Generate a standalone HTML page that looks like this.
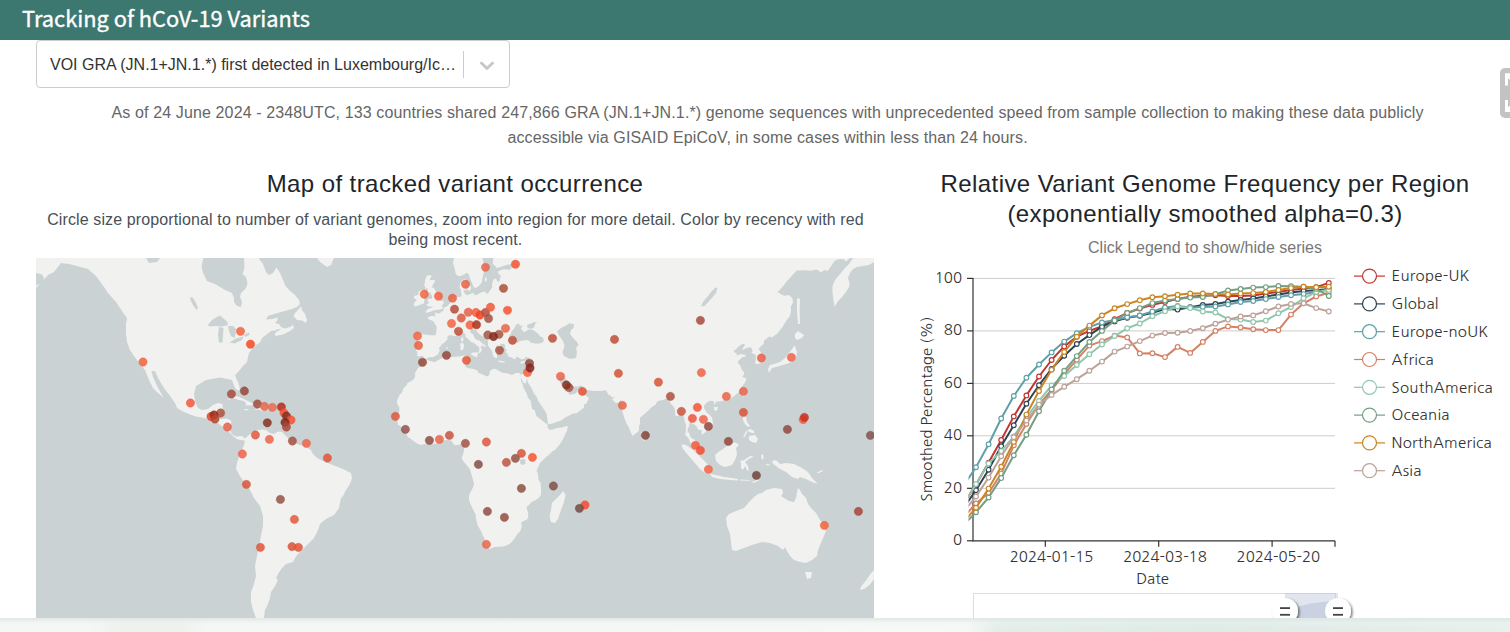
<!DOCTYPE html>
<html lang="en">
<head>
<meta charset="utf-8">
<title>Tracking of hCoV-19 Variants</title>
<style>
html,body{margin:0;padding:0;}
body{width:1510px;height:632px;overflow:hidden;background:#fff;position:relative;font-family:"Liberation Sans",Arial,sans-serif;color:#333;}
.abs{position:absolute;}
#hdr{left:0;top:0;width:1510px;height:40px;background:#3d7870;}
#hdr span{position:absolute;left:22px;top:1px;-webkit-text-stroke:0.35px #fff;font-family:"Noto Sans CJK SC","Liberation Sans",sans-serif;font-size:21.8px;line-height:34px;color:#fff;font-weight:400;white-space:nowrap;letter-spacing:0;}
#sel{left:36px;top:40px;width:472px;height:46px;border:1px solid #ccc;border-radius:4px;background:#fff;}
#sel .val{position:absolute;left:13px;top:0;line-height:47px;font-size:16px;color:#333;white-space:nowrap;letter-spacing:0;}
#sel .sep{position:absolute;left:426px;top:10px;width:1px;height:27px;background:#ccc;}
#sel svg{position:absolute;left:437.5px;top:11.5px;}
#intro{left:90.6px;top:100px;width:1354px;text-align:center;font-size:16px;line-height:25px;color:#666;letter-spacing:0.123px;}
#fs{left:1500px;top:68px;width:30px;height:50px;border-radius:5px;background:#c3c3c3;}
#fs svg{position:absolute;left:0;top:0;}
#mtitle{left:36px;top:168.4px;width:838px;text-align:center;font-size:24px;line-height:32px;color:#212529;white-space:nowrap;letter-spacing:0.42px;}
#msub{left:36.5px;top:210px;width:838px;text-align:center;font-size:16px;line-height:20px;color:#495057;letter-spacing:0.12px;}
#map{left:36px;top:258px;width:838px;height:360px;background:#cad2d3;overflow:hidden;}
#ctitle{left:900px;top:168.5px;width:610px;text-align:center;font-size:24px;line-height:30px;color:#212529;letter-spacing:0.42px;}
#csub{left:900px;top:238px;width:610px;text-align:center;font-size:16px;line-height:20px;color:#777;}
#chart{left:900px;top:258px;width:610px;height:374px;}
#chart text.lg{letter-spacing:0.28px;}
#chart text{font-family:"NanumGothic","Liberation Sans",sans-serif;font-size:15px;fill:#333;}
#foot{left:0;top:618px;width:1510px;height:14px;background:linear-gradient(180deg,rgba(222,230,228,0.9) 0,rgba(240,244,243,0.3) 5px,rgba(255,255,255,0) 10px),linear-gradient(100deg,#f5f7f6 0,#f5f7f6 6%,#edf2ed 8%,#edf2ed 12%,#f5f7f6 14%,#f6f8f7 64%,#e2eeea 66%,#deebe7 80%,#e6f0ed 100%);}
</style>
</head>
<body>
<div id="hdr" class="abs"><span>Tracking of hCoV-19 Variants</span></div>
<div id="sel" class="abs"><div class="val">VOI GRA (JN.1+JN.1.*) first detected in Luxembourg/Ic…</div><div class="sep"></div>
<svg width="24" height="24" viewBox="0 0 20 20"><path fill="#c6c6c6" d="M4.516 7.548c0.436-0.446 1.043-0.481 1.576 0l3.908 3.747 3.908-3.747c0.533-0.481 1.141-0.446 1.574 0 0.436 0.445 0.408 1.197 0 1.615-0.406 0.418-4.695 4.502-4.695 4.502-0.217 0.223-0.502 0.335-0.787 0.335s-0.57-0.112-0.789-0.335c0 0-4.287-4.084-4.695-4.502s-0.436-1.17 0-1.615z"/></svg></div>
<div id="intro" class="abs">As of 24 June 2024 - 2348UTC, 133 countries shared 247,866 GRA (JN.1+JN.1.*) genome sequences with unprecedented speed from sample collection to making these data publicly accessible via GISAID EpiCoV, in some cases within less than 24 hours.</div>
<div id="fs" class="abs"><svg width="30" height="50" viewBox="0 0 30 50"><path d="M6.5 17.5 V6.8 H14" fill="none" stroke="#fff" stroke-width="3"/><path d="M7 7.5 L14 14" fill="none" stroke="#fff" stroke-width="2.4"/><path d="M6.5 32 V42.6 H14" fill="none" stroke="#fff" stroke-width="3"/><path d="M7 42 L14 35.5" fill="none" stroke="#fff" stroke-width="2.4"/></svg></div>
<div id="mtitle" class="abs">Map of tracked variant occurrence</div>
<div id="msub" class="abs">Circle size proportional to number of variant genomes, zoom into region for more detail. Color by recency with red being most recent.</div>
<div id="map" class="abs">
<svg id="mapsvg" width="838" height="360" viewBox="36 258 838 360">
<g id="land" fill="#f1f1ef" stroke="none">
<polygon points="36.0,258.0 146.0,258.0 149.0,263.0 157.0,262.0 160.0,258.0 203.5,258.0 201.5,266.0 203.0,273.0 207.0,281.0 215.0,284.0 225.0,290.0 232.0,293.0 234.0,298.0 234.0,302.0 237.0,306.0 241.0,307.0 242.0,302.0 240.0,297.0 241.0,293.0 246.0,288.0 247.5,283.0 246.0,277.0 242.5,274.0 244.5,268.0 244.0,258.0 258.5,258.0 263.0,264.0 266.0,272.0 269.0,275.0 273.0,273.0 276.5,267.5 280.0,273.0 283.0,280.0 285.5,286.0 290.0,291.0 295.0,295.0 299.0,300.0 300.0,304.0 297.0,307.0 292.0,309.0 281.0,312.0 268.0,316.0 266.0,319.5 272.0,319.0 278.0,317.5 277.0,321.0 275.0,323.0 279.0,324.0 281.0,327.0 285.0,328.5 290.0,327.0 293.0,325.0 294.0,328.0 290.0,331.0 283.0,334.5 275.5,336.0 274.5,334.0 277.0,331.5 281.0,329.5 278.0,329.0 275.0,330.5 271.0,331.0 266.0,335.0 262.0,338.0 260.0,342.5 256.0,345.0 252.0,349.0 249.0,353.0 248.0,357.0 247.0,362.0 243.0,366.0 239.0,371.0 235.0,375.0 234.0,378.0 235.0,373.0 236.0,378.0 238.0,382.0 240.0,389.0 238.4,391.0 235.0,388.0 232.0,380.0 230.0,379.6 220.0,377.6 206.0,380.0 196.0,386.0 194.0,394.0 195.0,402.0 198.0,408.0 202.0,410.0 208.0,409.0 213.0,405.0 218.0,403.0 222.4,404.0 223.0,408.0 221.0,412.0 219.5,414.0 218.0,418.5 220.0,419.0 223.0,419.0 227.0,418.5 231.5,421.0 231.0,423.5 230.0,428.5 230.5,431.5 232.0,434.0 234.0,435.5 236.0,436.5 242.0,436.0 245.0,438.5 250.0,434.0 256.0,430.5 262.0,429.5 266.0,430.0 270.0,433.0 274.0,434.0 278.0,431.5 282.0,432.0 285.0,435.0 288.0,438.0 292.0,442.0 300.0,445.0 306.0,447.0 311.0,450.0 313.0,454.0 317.0,458.0 323.0,461.0 330.0,464.0 338.0,467.0 345.0,470.0 351.0,473.0 352.0,478.0 350.0,484.0 346.0,490.0 343.0,496.0 341.0,498.0 339.0,508.0 334.0,515.0 326.0,519.0 320.0,524.0 318.0,530.0 314.0,538.0 308.0,544.0 302.0,550.0 298.0,554.0 295.0,558.0 293.0,562.0 286.0,564.0 282.0,568.0 278.0,574.0 276.0,578.0 278.0,580.0 275.0,586.0 271.0,592.0 270.0,598.0 268.0,604.0 265.0,610.0 264.0,618.0 256.0,618.0 253.0,610.0 251.0,602.0 251.0,592.0 254.0,584.0 256.0,576.0 255.0,566.0 257.0,556.0 259.0,546.0 261.0,536.0 263.0,526.0 263.0,516.0 260.0,506.0 254.0,498.0 249.0,488.0 244.0,482.0 240.0,476.0 236.0,469.0 237.0,463.0 239.0,457.0 242.0,450.0 244.0,445.0 245.0,441.0 244.0,440.5 238.0,439.5 234.0,437.0 230.0,433.0 224.0,428.0 218.0,423.0 212.0,420.0 204.0,418.0 194.0,416.0 184.0,412.0 177.0,408.0 175.0,403.0 170.0,396.0 164.0,388.0 158.0,378.0 155.0,371.0 151.5,371.0 153.0,377.0 157.0,386.0 162.0,395.0 163.5,397.5 158.0,393.0 153.0,388.0 149.0,380.0 145.0,370.0 140.0,364.0 134.0,356.0 130.0,350.0 127.0,342.0 126.0,334.0 126.0,324.0 127.0,318.0 124.0,314.0 116.0,302.0 108.0,293.0 104.0,287.0 96.0,276.0 88.0,269.0 69.0,264.0 61.0,263.0 54.0,272.0 48.0,275.0 36.0,288.0"/>
<polygon points="317.0,258.0 320.0,262.0 327.0,267.0 331.0,265.0 334.0,258.0"/>
<polygon points="295.0,313.0 299.0,309.0 301.0,306.0 302.0,310.0 305.0,314.0 307.0,320.0 306.0,323.0 302.0,320.5 297.0,320.0 293.5,316.0"/>
<polygon points="227.2,399.9 232.0,397.2 234.5,396.3 238.2,396.6 240.8,397.7 245.8,400.1 249.5,401.7 254.0,404.2 252.0,405.2 245.2,405.4 246.5,403.6 243.8,400.9 238.8,399.9 235.0,398.5 232.5,398.2 229.8,399.6"/>
<polygon points="253.5,409.2 257.5,409.1 258.6,408.7 257.5,407.3 256.0,405.9 257.8,405.1 262.0,405.4 264.8,405.9 266.5,407.1 268.6,408.7 267.8,409.7 264.5,409.3 261.8,411.2 260.0,409.8 257.0,409.8 253.5,409.6"/>
<polygon points="243.6,409.5 247.0,408.9 249.0,410.1 247.2,410.6 244.0,410.0"/>
<polygon points="271.5,408.9 275.5,409.2 275.2,410.2 271.5,410.4"/>
<polygon points="427.0,275.5 431.9,275.3 429.5,280.2 434.5,279.8 435.0,280.7 434.4,282.3 432.5,285.8 431.2,287.6 433.2,287.6 434.5,288.7 436.0,292.0 439.2,295.8 439.8,298.0 440.4,300.5 439.8,301.1 442.8,300.7 443.9,302.5 442.8,304.8 441.2,306.6 443.1,307.1 442.9,308.2 441.9,309.0 440.1,309.6 437.5,309.7 433.4,310.6 430.4,311.8 426.5,312.7 425.2,312.3 428.2,308.6 432.0,307.8 432.8,306.6 431.5,306.8 428.8,306.4 426.2,305.0 429.2,302.5 427.6,301.3 428.0,298.8 432.0,298.8 432.2,295.8 430.5,294.1 431.0,292.2 427.4,293.6 426.8,292.4 427.9,290.0 427.2,287.8 425.8,288.9 425.1,290.7 425.5,287.6 424.0,284.4 425.0,283.0 425.0,280.2 426.2,277.2"/>
<polygon points="421.0,290.2 424.1,291.0 425.5,293.2 425.8,294.8 423.8,296.2 424.2,298.8 424.5,300.5 423.6,303.7 418.8,305.2 415.0,306.7 413.4,304.0 414.8,302.2 417.0,299.6 414.0,298.6 414.2,296.1 418.2,294.8 418.8,291.2"/>
<polygon points="454.0,258.0 453.0,263.0 454.5,268.0 455.5,273.0 457.0,275.5 460.0,276.2 464.0,274.5 467.0,272.8 469.0,275.0 470.0,278.5 472.0,283.0 473.5,287.0 476.0,288.0 480.0,285.0 482.0,282.0 482.5,278.0 484.0,272.0 483.5,263.0 482.5,258.0"/>
<polygon points="467.0,287.6 470.8,285.8 471.0,288.5 469.8,291.1 467.0,289.8"/>
<polygon points="464.0,288.5 466.2,288.5 466.2,290.4 464.5,290.4"/>
<polygon points="485.0,277.5 487.0,278.0 486.2,281.7 484.8,281.3"/>
<polygon points="493.2,258.0 492.8,263.8 495.2,265.9 497.0,268.1 502.0,266.4 507.0,264.8 511.2,264.1 515.0,267.6 512.0,267.6 509.5,269.8 504.5,269.3 501.2,270.1 498.2,271.3 498.2,273.7 500.8,275.4 500.2,278.0 499.5,281.5 497.5,281.7 496.0,278.5 493.5,279.4 492.0,284.0 492.2,287.6 489.5,290.9 488.0,293.5 486.0,293.3 485.5,291.5 482.0,292.0 478.2,294.1 475.2,295.4 473.2,292.8 469.8,294.3 466.8,295.2 464.5,293.0 463.5,291.3 464.5,288.5 465.0,285.6 466.8,284.5 465.2,282.0 466.0,278.2 464.2,279.2 461.0,281.3 459.9,284.0 459.8,288.0 461.0,290.2 461.0,293.3 461.8,295.0 460.8,296.7 457.2,297.1 454.2,297.5 451.4,299.4 449.8,303.3 447.5,305.9 444.1,307.5 443.4,310.5 439.8,313.2 436.5,313.5 436.2,312.4 434.6,312.4 435.5,316.4 432.0,315.7 427.6,317.4 428.8,319.6 432.5,320.7 434.2,322.2 435.0,324.4 436.6,325.8 436.5,331.0 435.5,335.2 430.0,335.2 425.0,334.6 420.2,334.1 416.5,336.7 417.5,340.1 417.8,343.4 416.0,349.0 415.9,350.8 417.2,351.7 417.4,353.5 417.1,356.3 419.8,356.3 422.2,355.7 423.8,357.6 425.5,359.4 426.2,359.0 428.5,357.2 433.5,356.9 434.8,356.3 437.8,354.4 439.2,351.6 440.0,350.8 438.8,348.5 441.8,344.4 445.0,342.1 447.8,339.1 447.1,337.0 449.5,335.0 453.0,335.7 456.0,336.2 457.8,334.3 461.8,331.9 465.0,333.6 465.8,336.9 469.0,339.8 471.0,341.9 473.5,342.6 475.2,344.1 477.0,345.7 478.5,346.6 479.5,349.0 478.6,352.8 479.8,353.3 482.2,350.0 480.8,347.7 481.8,345.2 484.5,346.7 485.6,347.2 485.8,346.1 484.2,344.4 481.8,342.9 479.5,340.4 477.0,340.1 475.0,338.4 473.2,334.6 470.5,332.6 470.5,328.7 473.8,327.3 473.5,329.4 474.2,330.3 475.5,328.7 477.5,332.6 480.5,335.0 484.8,337.9 487.8,340.6 488.1,342.4 488.0,345.4 489.5,347.7 491.4,350.1 492.5,352.2 492.4,353.5 493.6,356.8 495.5,358.0 497.4,358.0 496.8,354.7 497.2,353.5 499.5,354.1 499.5,352.5 497.0,350.3 496.9,349.0 496.0,346.7 496.8,345.1 498.8,346.7 500.5,346.1 500.5,343.8 504.2,343.9 504.8,344.8 505.0,346.4 505.0,348.3 506.8,350.0 506.0,351.2 505.2,352.2 507.5,353.3 507.5,355.4 508.0,356.3 510.0,357.2 512.2,357.4 513.5,359.0 516.0,358.5 516.0,356.8 518.8,357.6 521.0,359.3 523.8,359.0 526.0,357.1 528.5,357.7 530.0,357.6 529.0,359.4 529.2,361.9 529.2,364.0 528.2,365.8 527.2,368.2 526.9,369.1 526.4,371.3 525.8,373.0 525.0,373.5 523.5,374.1 521.0,374.3 520.4,373.7 520.9,377.3 522.5,381.6 525.1,383.7 526.0,382.8 526.9,378.8 528.0,382.8 531.8,388.6 533.8,393.3 536.8,396.9 538.2,400.9 541.8,406.3 544.8,410.8 546.8,414.4 547.2,418.3 547.8,422.4 548.2,424.1 552.0,423.7 555.8,422.2 561.2,420.5 564.5,418.1 570.0,414.9 572.2,413.8 577.0,412.9 580.2,410.4 584.0,407.6 584.0,404.2 586.0,403.9 589.0,398.2 586.0,395.3 582.0,394.2 580.5,391.7 580.4,387.5 579.5,388.6 577.8,390.6 575.5,393.6 572.0,394.4 568.5,394.2 568.8,391.4 568.5,388.4 567.0,388.6 566.2,391.7 564.5,390.3 564.0,387.0 561.2,384.2 560.0,381.9 559.0,379.3 560.0,377.5 561.8,376.5 564.2,376.7 566.5,379.9 568.2,383.3 571.0,384.7 574.5,386.7 578.2,386.4 580.2,385.4 582.0,386.1 582.8,389.5 586.5,390.0 591.0,390.6 593.5,390.9 598.2,390.7 601.2,390.9 605.8,390.3 607.0,392.0 608.2,394.4 610.8,395.5 611.5,397.2 615.2,397.2 612.5,398.8 612.0,399.1 613.8,400.9 615.5,403.0 617.0,403.0 619.8,401.7 620.8,399.1 621.2,402.0 621.5,407.6 622.8,412.9 624.0,417.0 626.5,423.5 629.0,427.8 630.2,431.1 632.0,435.2 633.4,435.7 635.0,433.7 637.2,432.6 639.1,430.1 639.0,426.3 640.2,423.0 639.8,418.1 642.0,416.0 645.2,413.6 647.8,411.0 652.0,406.8 655.8,404.4 657.0,401.5 660.0,400.4 663.2,400.1 665.8,398.8 668.2,398.2 669.0,398.8 670.2,403.1 671.8,404.7 674.5,408.1 675.2,412.9 675.0,415.5 678.0,416.1 680.0,414.4 682.5,413.9 683.5,415.7 684.0,418.6 685.0,421.9 686.0,425.8 685.8,430.9 685.2,435.2 686.8,436.2 688.8,439.0 690.4,442.5 691.0,445.5 692.8,448.7 695.0,450.5 698.0,452.5 699.8,452.6 700.1,452.2 699.2,449.7 698.0,446.5 698.0,444.2 695.8,441.0 694.0,439.2 691.0,438.0 689.8,434.9 689.2,432.6 687.8,432.6 687.5,429.6 689.0,426.3 689.5,423.5 689.8,422.2 691.0,421.9 691.9,422.7 691.8,424.2 694.0,424.0 695.2,425.3 696.8,426.5 697.2,428.6 698.2,429.6 700.5,429.9 701.8,430.6 701.5,434.4 703.0,433.9 705.8,431.9 706.5,429.9 707.8,429.9 710.2,428.3 712.0,427.3 712.8,424.5 712.8,421.2 711.8,417.3 710.0,415.2 707.2,412.9 705.5,410.5 703.8,408.1 704.2,405.2 706.0,403.6 706.5,402.7 708.2,401.7 710.0,400.8 712.2,400.9 713.8,401.2 714.0,403.9 715.2,404.2 715.8,401.7 721.0,401.3 724.0,400.3 725.5,399.5 727.0,399.5 730.2,398.4 733.0,397.0 736.2,394.3 738.2,392.7 740.5,390.4 740.8,388.0 742.8,385.2 744.8,382.9 746.0,380.0 746.2,378.2 742.0,376.5 744.2,374.7 744.0,372.4 741.8,369.4 740.2,365.5 737.8,363.1 737.8,361.6 740.0,359.4 742.0,357.6 745.8,356.3 745.8,355.1 743.0,354.6 740.2,354.1 737.0,355.7 736.8,353.8 734.5,352.2 733.8,350.3 735.8,349.6 738.2,347.0 742.0,344.1 744.2,343.8 745.0,345.1 742.8,348.3 742.5,350.6 745.8,348.3 750.0,347.2 752.0,348.3 752.5,350.9 751.5,352.8 753.5,354.1 755.8,354.7 755.8,357.9 755.5,361.0 755.2,363.7 757.8,364.0 760.8,362.9 762.5,362.0 763.2,359.4 763.0,356.3 761.0,352.5 758.5,349.0 760.2,346.7 763.8,343.9 764.0,340.8 766.2,339.1 769.2,336.4 772.0,337.4 777.5,333.3 781.8,328.0 785.8,321.5 790.0,315.8 791.0,311.2 790.8,306.5 793.0,302.5 792.5,298.3 789.0,295.0 784.5,295.8 782.5,295.0 777.5,292.0 783.2,286.3 785.8,282.6 790.8,277.1 795.8,271.3 797.5,270.6 804.0,270.3 810.8,270.8 816.5,269.6 820.8,272.3 825.2,269.8 827.5,271.3 835.0,260.5 840.0,259.0 844.0,259.5 846.0,261.5 850.0,258.0"/>
<polygon points="853.0,258.0 849.0,264.0 845.0,268.0 840.0,274.0 835.0,280.0 832.5,286.0 832.5,293.0 833.5,300.0 834.5,307.0 838.0,301.0 842.0,297.0 846.0,292.0 849.0,287.0 849.5,283.0 848.0,278.0 850.0,273.0 853.0,269.0 857.0,267.0 863.0,266.0 869.0,265.0 874.0,262.0 874.0,258.0"/>
<polygon points="797.0,298.0 800.0,299.0 799.6,310.0 800.0,324.0 798.0,324.0 797.0,312.0"/>
<polygon points="795.0,334.0 798.0,331.0 804.0,335.0 802.0,338.0 797.0,340.0 795.0,338.0"/>
<polygon points="795.0,346.0 797.0,352.0 796.0,358.0 792.0,362.0 786.0,364.0 780.0,366.0 776.0,367.0 772.0,368.0 769.0,373.0 768.0,369.0 770.0,365.0 774.0,364.0 780.0,362.0 785.0,358.0 789.0,353.0 792.0,349.0 794.0,346.0"/>
<polygon points="470.6,353.8 472.8,352.5 478.5,352.4 477.2,355.4 477.2,357.2 475.5,357.1 471.2,354.6"/>
<polygon points="460.0,343.8 462.5,342.6 464.0,345.1 463.5,349.3 462.0,350.0 460.5,350.3 460.5,346.7"/>
<polygon points="461.0,338.7 463.0,336.7 463.4,339.8 462.5,342.1 461.2,340.8"/>
<polygon points="498.4,361.0 500.0,360.6 504.0,361.6 505.2,361.9 504.8,362.5 501.5,362.6 498.5,361.7"/>
<polygon points="520.2,362.3 522.0,361.4 526.0,360.3 524.5,362.5 522.0,363.7 520.5,363.2"/>
<polygon points="445.5,348.0 447.2,346.9 448.0,347.7 447.0,349.0"/>
<polygon points="424.8,360.0 426.2,359.7 432.1,361.6 434.5,362.2 437.9,360.3 442.0,357.9 447.1,356.9 452.2,356.9 458.9,356.6 464.1,355.4 467.1,356.0 465.8,358.2 466.4,363.2 464.8,365.8 467.2,367.9 472.5,368.8 477.2,370.3 478.5,373.0 481.0,373.8 487.2,376.6 489.6,374.4 489.6,371.2 493.2,368.8 496.1,369.3 499.5,371.2 502.4,372.8 507.6,373.4 512.0,374.9 514.2,373.8 517.0,372.8 519.0,373.0 520.2,373.7 520.9,377.3 521.0,381.6 522.5,383.6 523.2,386.7 525.5,391.4 527.0,394.2 527.5,396.9 530.8,400.9 531.5,406.0 532.0,408.7 534.8,410.2 536.2,415.5 537.0,416.5 541.0,419.4 544.8,422.7 547.2,424.0 547.8,426.8 547.0,427.1 549.5,429.7 552.0,429.7 557.0,428.1 562.0,427.6 566.5,425.9 567.8,426.3 567.2,429.9 564.5,435.9 562.0,441.0 559.5,444.7 554.5,450.5 552.8,451.0 548.2,455.5 544.5,458.5 542.0,461.0 540.0,462.8 538.8,466.1 537.5,468.5 536.5,471.0 537.8,473.0 538.2,476.1 538.5,479.9 540.5,482.4 541.0,487.5 541.2,492.6 540.8,495.2 538.2,498.6 533.2,501.2 531.8,501.8 528.2,505.7 526.6,506.6 527.0,509.7 528.2,512.4 528.2,517.6 527.0,519.5 522.0,521.7 521.0,523.4 521.8,526.1 520.5,530.7 517.0,534.4 514.5,538.5 510.8,542.9 507.0,545.3 503.8,546.5 498.2,546.8 494.5,547.1 489.5,548.9 486.5,547.4 485.5,547.4 485.2,543.5 484.2,542.3 485.0,539.6 482.8,535.5 480.8,530.7 477.5,525.0 475.8,517.8 475.8,514.8 473.0,509.2 470.2,503.6 469.0,499.7 469.0,496.0 470.2,492.6 473.0,487.5 474.0,483.7 472.5,478.1 470.5,471.3 469.5,468.5 467.0,465.5 463.5,461.8 461.5,457.8 463.0,455.0 463.8,451.2 464.0,448.5 463.8,446.0 461.8,444.7 460.2,444.6 457.0,445.0 454.5,445.2 452.0,441.7 450.5,440.2 448.0,440.0 445.5,440.2 442.5,440.7 439.5,442.0 439.0,442.2 434.5,444.0 432.0,443.2 429.5,442.9 424.5,444.0 420.8,445.0 417.0,443.5 412.5,440.2 410.8,438.7 408.2,437.2 406.5,434.7 406.2,433.2 405.2,432.1 403.0,429.3 401.8,428.3 400.5,426.0 397.8,424.8 397.8,422.2 397.0,420.1 395.8,418.8 397.5,416.8 398.2,415.5 398.8,412.9 399.5,410.0 399.0,406.8 398.2,406.0 396.9,402.6 397.2,400.1 399.5,395.0 402.2,392.2 403.2,388.4 406.5,385.4 407.2,383.2 411.8,380.8 414.0,379.0 415.2,376.2 415.0,373.0 416.5,370.6 418.2,367.8 420.5,366.7 422.5,365.4 423.8,363.1"/>
<polygon points="563.0,491.0 565.6,495.0 564.0,502.0 561.0,510.0 558.0,519.0 555.0,523.0 551.0,522.0 549.6,516.0 551.0,510.0 552.0,503.0 556.0,499.0 560.0,495.0"/>
<polygon points="641.0,432.0 645.0,433.0 647.0,438.0 644.0,441.0 641.0,438.0"/>
<polygon points="714.0,407.0 718.0,407.0 717.0,411.0 714.0,410.0"/>
<polygon points="743.0,391.0 745.0,390.0 744.4,397.0 742.6,396.0"/>
<polygon points="681.6,444.6 685.6,444.8 692.4,449.6 698.4,455.0 704.4,461.0 709.6,466.4 711.2,471.0 710.2,474.2 706.0,473.6 700.0,469.0 693.6,461.6 687.6,454.4 682.4,448.0"/>
<polygon points="710.0,474.0 716.0,475.0 724.0,477.0 732.0,478.0 738.0,479.0 738.0,480.4 730.0,480.0 720.0,479.0 712.0,477.0"/>
<polygon points="715.0,455.0 719.0,451.5 723.0,449.0 728.0,445.0 732.0,443.0 736.0,442.5 739.0,445.0 736.0,448.0 737.0,454.0 735.0,460.0 732.0,465.0 725.0,467.0 720.0,465.0 716.0,461.0"/>
<polygon points="740.0,461.0 744.0,460.0 750.0,456.0 754.0,456.4 749.0,459.0 745.0,462.0 748.0,466.0 749.0,471.0 747.0,470.0 745.0,466.0 743.0,470.0 741.0,468.0 741.0,463.0"/>
<polygon points="743.0,416.0 746.0,417.0 747.0,422.0 750.0,426.0 748.0,427.0 745.0,424.0 743.0,420.0"/>
<polygon points="749.0,436.0 755.0,435.0 758.0,439.0 756.0,443.0 752.0,442.0 749.0,440.0"/>
<polygon points="748.0,429.6 751.0,429.2 754.0,431.0 754.4,433.2 751.6,432.8 749.0,432.0"/>
<polygon points="747.0,430.0 744.0,435.0 743.2,437.6 744.4,437.2 747.6,431.6"/>
<polygon points="772.0,461.0 776.0,460.0 780.0,464.0 786.0,463.0 794.0,464.0 802.0,468.0 808.0,472.0 812.0,478.0 817.0,483.0 818.0,484.0 812.0,482.0 806.0,479.0 800.0,477.0 798.0,479.0 792.0,477.0 786.0,472.0 780.0,469.0 776.0,466.0 773.0,464.0"/>
<polygon points="752.0,482.0 758.0,479.6 759.0,480.6 753.0,483.0"/>
<polygon points="740.0,479.6 745.0,479.8 750.0,480.0 750.0,480.8 740.0,480.6"/>
<polygon points="761.0,455.0 763.0,454.0 763.6,458.0 762.4,460.0 761.4,458.0"/>
<polygon points="817.0,472.4 822.0,470.0 823.0,471.0 818.0,473.6"/>
<polygon points="766.0,464.0 770.0,464.4 769.6,465.6 766.0,465.2"/>
<polygon points="726.0,518.0 729.0,514.0 736.0,511.0 744.0,508.0 749.0,502.0 754.0,497.0 758.0,494.0 762.0,493.0 766.0,490.0 774.0,488.0 782.0,489.0 783.0,493.0 781.0,496.0 784.0,498.0 789.0,501.0 794.0,502.0 796.0,498.0 797.0,492.0 798.0,488.0 800.0,490.0 802.0,494.0 806.0,498.0 808.0,504.0 812.0,509.0 816.0,513.0 820.0,520.0 824.0,525.0 826.0,531.0 824.0,536.0 821.0,543.0 818.0,550.0 817.0,556.0 812.0,560.0 806.0,563.0 800.0,562.0 794.0,560.0 790.0,556.0 787.0,551.0 785.0,547.0 783.0,550.0 778.0,546.0 770.0,543.0 762.0,542.0 752.0,545.0 744.0,548.0 736.0,551.0 732.0,550.0 731.0,542.0 730.0,534.0 727.0,526.0"/>
<polygon points="805.0,572.0 812.0,572.0 811.0,578.0 807.0,579.0"/>
<polygon points="874.0,570.0 874.0,579.0 870.0,584.5 864.0,589.0 860.0,590.0 861.0,586.5 866.0,580.5 870.0,574.5"/>
</g><g id="water" fill="#cad2d3" stroke="none">
<polygon points="207.5,325.5 212.0,320.0 216.0,317.5 220.0,315.5 223.0,318.0 227.0,321.5 228.0,325.0 222.0,326.5 216.0,326.0 211.0,326.5"/>
<polygon points="219.0,327.0 223.5,328.0 223.0,335.0 222.5,342.5 219.0,342.5 218.0,335.0"/>
<polygon points="228.0,326.0 233.0,326.0 236.0,329.0 235.5,334.0 234.5,338.0 231.0,336.0 229.0,331.0"/>
<polygon points="229.5,342.5 236.0,338.5 243.5,336.5 242.0,340.0 234.5,343.5"/>
<polygon points="243.5,335.0 248.5,332.5 250.0,334.5 245.5,337.0"/>
<polygon points="190.0,297.0 193.0,298.0 196.0,303.0 198.0,308.0 196.5,310.0 193.0,305.0 190.5,300.0"/>
<polygon points="512.0,343.1 509.8,341.4 509.2,337.7 509.2,336.0 511.0,334.1 511.0,332.2 513.8,329.0 515.0,326.7 516.4,324.4 519.0,323.6 519.5,325.5 522.8,325.8 520.8,328.5 523.2,331.2 524.5,331.9 528.0,329.8 530.6,329.4 532.8,330.1 534.0,330.8 535.8,332.0 537.2,333.1 538.8,334.6 540.2,336.4 542.0,336.9 543.4,338.7 543.8,341.3 542.8,342.3 539.5,343.6 538.8,343.4 535.5,343.6 532.8,343.1 530.4,342.4 529.5,341.1 527.4,339.9 524.5,340.3 522.0,340.4 520.2,341.1 518.0,342.4 515.2,342.9"/>
<polygon points="527.0,326.2 527.8,324.4 531.5,323.5 533.5,322.2 537.5,322.0 535.2,323.6 534.5,326.2 533.5,328.0 531.2,328.7 529.0,328.2 527.8,328.3"/>
<polygon points="569.0,323.5 574.0,324.0 573.5,328.0 571.0,330.0 570.0,334.0 573.0,338.0 577.0,342.0 578.5,345.0 576.0,348.0 577.0,352.0 576.0,358.0 570.0,359.0 564.0,356.0 562.5,352.0 564.5,346.0 563.0,341.0 559.0,335.0 557.0,331.5 561.0,328.0 565.0,326.0"/>
<polygon points="701.0,306.5 704.5,306.0 711.0,299.0 716.0,293.0 717.5,288.0 715.5,287.5 712.0,291.0 707.5,296.5 703.0,302.0"/>
<polygon points="36.0,273.0 42.0,274.5 44.0,278.0 42.0,283.0 36.0,285.5"/>
<polygon points="520.0,459.5 525.0,459.0 525.5,463.5 523.0,465.0 520.5,464.0"/>
</g>
<g id="dots" fill-opacity="0.86" stroke-opacity="0.55" stroke-width="0.8">
<circle cx="143" cy="362" r="4.15" fill="#f4623f" stroke="#f4623f"/>
<circle cx="240.5" cy="331.3" r="4.15" fill="#f4623f" stroke="#f4623f"/>
<circle cx="250.5" cy="344.2" r="4.15" fill="#f64924" stroke="#f64924"/>
<circle cx="190.4" cy="403" r="4.15" fill="#f3593c" stroke="#f3593c"/>
<circle cx="231.4" cy="394" r="4.15" fill="#a64d3c" stroke="#a64d3c"/>
<circle cx="244.4" cy="391" r="4.15" fill="#95493a" stroke="#95493a"/>
<circle cx="220.6" cy="413" r="4.15" fill="#ad523d" stroke="#ad523d"/>
<circle cx="211" cy="416.5" r="4.15" fill="#e44226" stroke="#e44226"/>
<circle cx="214" cy="415" r="4.15" fill="#972b1b" stroke="#972b1b"/>
<circle cx="215" cy="419" r="4.15" fill="#b44631" stroke="#b44631"/>
<circle cx="227.4" cy="427" r="4.15" fill="#e8604a" stroke="#e8604a"/>
<circle cx="257.4" cy="404" r="4.15" fill="#a14f3e" stroke="#a14f3e"/>
<circle cx="264.4" cy="406.4" r="4.15" fill="#e8654a" stroke="#e8654a"/>
<circle cx="272.4" cy="407.4" r="4.15" fill="#ea6a50" stroke="#ea6a50"/>
<circle cx="281.4" cy="407" r="4.15" fill="#b62e19" stroke="#b62e19"/>
<circle cx="284" cy="413" r="4.15" fill="#f45236" stroke="#f45236"/>
<circle cx="286.4" cy="416" r="4.15" fill="#853021" stroke="#853021"/>
<circle cx="291" cy="420" r="4.15" fill="#f45236" stroke="#f45236"/>
<circle cx="285" cy="422.4" r="4.15" fill="#862516" stroke="#862516"/>
<circle cx="286.4" cy="427" r="4.15" fill="#a74738" stroke="#a74738"/>
<circle cx="267.3" cy="422.8" r="4.15" fill="#853323" stroke="#853323"/>
<circle cx="255.4" cy="435" r="4.15" fill="#e2593d" stroke="#e2593d"/>
<circle cx="269.4" cy="439.4" r="4.15" fill="#f0644a" stroke="#f0644a"/>
<circle cx="292.4" cy="441" r="4.15" fill="#a65242" stroke="#a65242"/>
<circle cx="306.4" cy="443.4" r="4.15" fill="#f0644a" stroke="#f0644a"/>
<circle cx="327.4" cy="458" r="4.15" fill="#e25438" stroke="#e25438"/>
<circle cx="242.4" cy="454" r="4.15" fill="#f0644a" stroke="#f0644a"/>
<circle cx="246.4" cy="484.4" r="4.15" fill="#d9543b" stroke="#d9543b"/>
<circle cx="280.4" cy="499.4" r="4.15" fill="#945446" stroke="#945446"/>
<circle cx="294.4" cy="519.4" r="4.15" fill="#e05c3f" stroke="#e05c3f"/>
<circle cx="260.4" cy="547.4" r="4.15" fill="#de563a" stroke="#de563a"/>
<circle cx="292" cy="546.6" r="4.15" fill="#d9543b" stroke="#d9543b"/>
<circle cx="298.4" cy="547.4" r="4.15" fill="#e15638" stroke="#e15638"/>
<circle cx="485.5" cy="267.3" r="4.15" fill="#e8674e" stroke="#e8674e"/>
<circle cx="515.5" cy="264.2" r="4.15" fill="#f45434" stroke="#f45434"/>
<circle cx="465.5" cy="284.2" r="4.15" fill="#ea6548" stroke="#ea6548"/>
<circle cx="503.5" cy="288.3" r="4.15" fill="#ad523d" stroke="#ad523d"/>
<circle cx="424.3" cy="294.2" r="4.15" fill="#f4673f" stroke="#f4673f"/>
<circle cx="438.5" cy="296.2" r="4.15" fill="#f4623f" stroke="#f4623f"/>
<circle cx="452.5" cy="298.2" r="4.15" fill="#ea6045" stroke="#ea6045"/>
<circle cx="454.5" cy="309.2" r="4.15" fill="#b64e3c" stroke="#b64e3c"/>
<circle cx="468.3" cy="312.2" r="4.15" fill="#e86048" stroke="#e86048"/>
<circle cx="476" cy="312.5" r="4.15" fill="#f06045" stroke="#f06045"/>
<circle cx="480" cy="315" r="4.15" fill="#f64022" stroke="#f64022"/>
<circle cx="485.5" cy="312.5" r="4.15" fill="#b3513c" stroke="#b3513c"/>
<circle cx="490.5" cy="307.2" r="4.15" fill="#f35739" stroke="#f35739"/>
<circle cx="507.5" cy="310.3" r="4.15" fill="#f85434" stroke="#f85434"/>
<circle cx="488.5" cy="318.5" r="4.15" fill="#a65144" stroke="#a65144"/>
<circle cx="461.3" cy="318" r="4.15" fill="#dd583f" stroke="#dd583f"/>
<circle cx="451.5" cy="323.5" r="4.15" fill="#f46545" stroke="#f46545"/>
<circle cx="458.5" cy="331.3" r="4.15" fill="#bf5039" stroke="#bf5039"/>
<circle cx="470" cy="325" r="4.15" fill="#f4623f" stroke="#f4623f"/>
<circle cx="476.5" cy="324.7" r="4.15" fill="#b0311a" stroke="#b0311a"/>
<circle cx="505.5" cy="328.3" r="4.15" fill="#e8674a" stroke="#e8674a"/>
<circle cx="487.8" cy="335" r="4.15" fill="#a05a44" stroke="#a05a44"/>
<circle cx="499" cy="334.3" r="4.15" fill="#a65944" stroke="#a65944"/>
<circle cx="493.5" cy="336.5" r="4.15" fill="#85271d" stroke="#85271d"/>
<circle cx="512.5" cy="340.3" r="4.15" fill="#bf5039" stroke="#bf5039"/>
<circle cx="499.5" cy="350.3" r="4.15" fill="#ad513f" stroke="#ad513f"/>
<circle cx="417.5" cy="336" r="4.15" fill="#f46545" stroke="#f46545"/>
<circle cx="418.5" cy="345.5" r="4.15" fill="#e86045" stroke="#e86045"/>
<circle cx="422.5" cy="362.3" r="4.15" fill="#95493a" stroke="#95493a"/>
<circle cx="446.5" cy="355.3" r="4.15" fill="#94483e" stroke="#94483e"/>
<circle cx="466.5" cy="360.3" r="4.15" fill="#e2593a" stroke="#e2593a"/>
<circle cx="527.5" cy="372.5" r="4.15" fill="#f4623f" stroke="#f4623f"/>
<circle cx="529.5" cy="363.3" r="4.15" fill="#94483e" stroke="#94483e"/>
<circle cx="530" cy="368" r="4.15" fill="#85271d" stroke="#85271d"/>
<circle cx="552.5" cy="338.3" r="4.15" fill="#bf5039" stroke="#bf5039"/>
<circle cx="560.5" cy="376.3" r="4.15" fill="#ea6448" stroke="#ea6448"/>
<circle cx="569" cy="387.6" r="4.15" fill="#ad523d" stroke="#ad523d"/>
<circle cx="566.4" cy="385" r="4.15" fill="#853023" stroke="#853023"/>
<circle cx="582.4" cy="391.4" r="4.15" fill="#e25438" stroke="#e25438"/>
<circle cx="614.5" cy="339.4" r="4.15" fill="#bf5039" stroke="#bf5039"/>
<circle cx="618.4" cy="373.4" r="4.15" fill="#d15637" stroke="#d15637"/>
<circle cx="658.4" cy="382.2" r="4.15" fill="#d95539" stroke="#d95539"/>
<circle cx="700.4" cy="320.4" r="4.15" fill="#a64d3c" stroke="#a64d3c"/>
<circle cx="701.4" cy="372.6" r="4.15" fill="#f0644a" stroke="#f0644a"/>
<circle cx="761.4" cy="358" r="4.15" fill="#ea6048" stroke="#ea6048"/>
<circle cx="791.4" cy="357.4" r="4.15" fill="#f06448" stroke="#f06448"/>
<circle cx="670.4" cy="396.4" r="4.15" fill="#ad523d" stroke="#ad523d"/>
<circle cx="622.4" cy="405.4" r="4.15" fill="#e8644a" stroke="#e8644a"/>
<circle cx="726.4" cy="396.4" r="4.15" fill="#ea6448" stroke="#ea6448"/>
<circle cx="743.4" cy="391.4" r="4.15" fill="#ea6448" stroke="#ea6448"/>
<circle cx="697.4" cy="407.4" r="4.15" fill="#f35739" stroke="#f35739"/>
<circle cx="681.4" cy="411.4" r="4.15" fill="#c75641" stroke="#c75641"/>
<circle cx="692.4" cy="418.4" r="4.15" fill="#ef573d" stroke="#ef573d"/>
<circle cx="703.4" cy="419.4" r="4.15" fill="#f0644a" stroke="#f0644a"/>
<circle cx="708.4" cy="426.4" r="4.15" fill="#94483e" stroke="#94483e"/>
<circle cx="743.4" cy="412.4" r="4.15" fill="#d9543b" stroke="#d9543b"/>
<circle cx="645.4" cy="435.4" r="4.15" fill="#834439" stroke="#834439"/>
<circle cx="695.4" cy="445.4" r="4.15" fill="#f35739" stroke="#f35739"/>
<circle cx="700.4" cy="450.4" r="4.15" fill="#f44b30" stroke="#f44b30"/>
<circle cx="728.4" cy="441.4" r="4.15" fill="#94483e" stroke="#94483e"/>
<circle cx="708.4" cy="469.4" r="4.15" fill="#f06448" stroke="#f06448"/>
<circle cx="756.4" cy="475.4" r="4.15" fill="#71453d" stroke="#71453d"/>
<circle cx="787.4" cy="429.4" r="4.15" fill="#8f4b40" stroke="#8f4b40"/>
<circle cx="803.2" cy="419.6" r="4.15" fill="#e8604a" stroke="#e8604a"/>
<circle cx="804.4" cy="417.4" r="4.15" fill="#ca321e" stroke="#ca321e"/>
<circle cx="870.4" cy="435.4" r="4.15" fill="#815451" stroke="#815451"/>
<circle cx="395.4" cy="416.4" r="4.15" fill="#dd583f" stroke="#dd583f"/>
<circle cx="405.4" cy="429.4" r="4.15" fill="#935349" stroke="#935349"/>
<circle cx="429.4" cy="440.4" r="4.15" fill="#8e4f45" stroke="#8e4f45"/>
<circle cx="439.4" cy="439.4" r="4.15" fill="#ea6448" stroke="#ea6448"/>
<circle cx="449.4" cy="435.4" r="4.15" fill="#c75641" stroke="#c75641"/>
<circle cx="465.4" cy="443.4" r="4.15" fill="#a65144" stroke="#a65144"/>
<circle cx="486.4" cy="442" r="4.15" fill="#dd583f" stroke="#dd583f"/>
<circle cx="478.4" cy="464.4" r="4.15" fill="#875048" stroke="#875048"/>
<circle cx="506.4" cy="462.4" r="4.15" fill="#be5642" stroke="#be5642"/>
<circle cx="521.4" cy="453.4" r="4.15" fill="#d9543b" stroke="#d9543b"/>
<circle cx="515.4" cy="458.4" r="4.15" fill="#945446" stroke="#945446"/>
<circle cx="532.4" cy="457.4" r="4.15" fill="#f45734" stroke="#f45734"/>
<circle cx="521.4" cy="488.4" r="4.15" fill="#8e5043" stroke="#8e5043"/>
<circle cx="553.4" cy="486" r="4.15" fill="#825148" stroke="#825148"/>
<circle cx="487.4" cy="511.4" r="4.15" fill="#944e42" stroke="#944e42"/>
<circle cx="504.4" cy="517.4" r="4.15" fill="#944e42" stroke="#944e42"/>
<circle cx="486.4" cy="544.4" r="4.15" fill="#ea6448" stroke="#ea6448"/>
<circle cx="585" cy="505" r="4.15" fill="#f44b30" stroke="#f44b30"/>
<circle cx="579.4" cy="508.4" r="4.15" fill="#764b43" stroke="#764b43"/>
<circle cx="824.4" cy="525.4" r="4.15" fill="#f4623f" stroke="#f4623f"/>
<circle cx="858.4" cy="511.4" r="4.15" fill="#a6463c" stroke="#a6463c"/>
</g>
</svg>
</div>
<div id="ctitle" class="abs">Relative Variant Genome Frequency per Region (exponentially smoothed alpha=0.3)</div>
<div id="csub" class="abs">Click Legend to show/hide series</div>
<div id="chart" class="abs">
<svg width="610" height="374" viewBox="900 258 610 374">
<defs><clipPath id="gclip"><rect x="968.5" y="270" width="372" height="275"/></clipPath><filter id="hsh" x="-50%" y="-50%" width="200%" height="200%"><feDropShadow dx="1.6" dy="1.2" stdDeviation="1.1" flood-color="#000" flood-opacity="0.5"/></filter></defs>
<line x1="973.0" x2="1335.0" y1="488.3" y2="488.3" stroke="#ccc" stroke-width="1"/>
<line x1="973.0" x2="1335.0" y1="435.8" y2="435.8" stroke="#ccc" stroke-width="1"/>
<line x1="973.0" x2="1335.0" y1="383.4" y2="383.4" stroke="#ccc" stroke-width="1"/>
<line x1="973.0" x2="1335.0" y1="330.9" y2="330.9" stroke="#ccc" stroke-width="1"/>
<line x1="973.0" x2="1335.0" y1="278.4" y2="278.4" stroke="#ccc" stroke-width="1"/>
<line x1="973.0" x2="973.0" y1="277.9" y2="541.3" stroke="#333" stroke-width="1.2"/>
<line x1="972.5" x2="1335.0" y1="540.8" y2="540.8" stroke="#333" stroke-width="1.2"/>
<line x1="967.0" x2="973.0" y1="540.8" y2="540.8" stroke="#333" stroke-width="1.2"/>
<text x="962" y="545.3" text-anchor="end">0</text>
<line x1="967.0" x2="973.0" y1="488.3" y2="488.3" stroke="#333" stroke-width="1.2"/>
<text x="962" y="492.8" text-anchor="end">20</text>
<line x1="967.0" x2="973.0" y1="435.8" y2="435.8" stroke="#333" stroke-width="1.2"/>
<text x="962" y="440.3" text-anchor="end">40</text>
<line x1="967.0" x2="973.0" y1="383.4" y2="383.4" stroke="#333" stroke-width="1.2"/>
<text x="962" y="387.9" text-anchor="end">60</text>
<line x1="967.0" x2="973.0" y1="330.9" y2="330.9" stroke="#333" stroke-width="1.2"/>
<text x="962" y="335.4" text-anchor="end">80</text>
<line x1="967.0" x2="973.0" y1="278.4" y2="278.4" stroke="#333" stroke-width="1.2"/>
<text x="962" y="282.9" text-anchor="end">100</text>
<line x1="1045.3" x2="1045.3" y1="540.8" y2="546.8" stroke="#333" stroke-width="1.2"/>
<text x="1051.6" y="561.5" text-anchor="middle">2024-01-15</text>
<line x1="1158.7" x2="1158.7" y1="540.8" y2="546.8" stroke="#333" stroke-width="1.2"/>
<text x="1165.0" y="561.5" text-anchor="middle">2024-03-18</text>
<line x1="1272.1" x2="1272.1" y1="540.8" y2="546.8" stroke="#333" stroke-width="1.2"/>
<text x="1278.4" y="561.5" text-anchor="middle">2024-05-20</text>
<line x1="1335.0" x2="1335.0" y1="540.8" y2="546.8" stroke="#333" stroke-width="1.2"/>
<text x="1152.5" y="583.5" text-anchor="middle">Date</text>
<text transform="translate(931.5,409) rotate(-90)" text-anchor="middle">Smoothed Percentage (%)</text>
<g clip-path="url(#gclip)">
<polyline points="963.4,504.1 976.0,484.4 988.6,462.6 1001.2,440.0 1013.8,416.4 1026.4,395.4 1039.0,376.5 1051.6,360.0 1064.2,346.4 1076.8,336.7 1089.4,330.9 1102.0,326.2 1114.6,319.1 1127.2,313.0 1139.8,308.6 1152.4,304.9 1165.0,302.0 1177.6,298.9 1190.2,296.8 1202.8,295.7 1215.4,295.2 1228.0,296.0 1240.6,296.0 1253.2,295.5 1265.8,293.6 1278.4,292.0 1291.0,289.9 1303.6,288.6 1316.2,287.1 1328.8,282.9" fill="none" stroke="#c23531" stroke-width="2" stroke-linejoin="bevel"/>
<circle cx="963.4" cy="504.1" r="2.35" fill="#fff" stroke="#c23531" stroke-width="1.15"/>
<circle cx="976.0" cy="484.4" r="2.35" fill="#fff" stroke="#c23531" stroke-width="1.15"/>
<circle cx="988.6" cy="462.6" r="2.35" fill="#fff" stroke="#c23531" stroke-width="1.15"/>
<circle cx="1001.2" cy="440.0" r="2.35" fill="#fff" stroke="#c23531" stroke-width="1.15"/>
<circle cx="1013.8" cy="416.4" r="2.35" fill="#fff" stroke="#c23531" stroke-width="1.15"/>
<circle cx="1026.4" cy="395.4" r="2.35" fill="#fff" stroke="#c23531" stroke-width="1.15"/>
<circle cx="1039.0" cy="376.5" r="2.35" fill="#fff" stroke="#c23531" stroke-width="1.15"/>
<circle cx="1051.6" cy="360.0" r="2.35" fill="#fff" stroke="#c23531" stroke-width="1.15"/>
<circle cx="1064.2" cy="346.4" r="2.35" fill="#fff" stroke="#c23531" stroke-width="1.15"/>
<circle cx="1076.8" cy="336.7" r="2.35" fill="#fff" stroke="#c23531" stroke-width="1.15"/>
<circle cx="1089.4" cy="330.9" r="2.35" fill="#fff" stroke="#c23531" stroke-width="1.15"/>
<circle cx="1102.0" cy="326.2" r="2.35" fill="#fff" stroke="#c23531" stroke-width="1.15"/>
<circle cx="1114.6" cy="319.1" r="2.35" fill="#fff" stroke="#c23531" stroke-width="1.15"/>
<circle cx="1127.2" cy="313.0" r="2.35" fill="#fff" stroke="#c23531" stroke-width="1.15"/>
<circle cx="1139.8" cy="308.6" r="2.35" fill="#fff" stroke="#c23531" stroke-width="1.15"/>
<circle cx="1152.4" cy="304.9" r="2.35" fill="#fff" stroke="#c23531" stroke-width="1.15"/>
<circle cx="1165.0" cy="302.0" r="2.35" fill="#fff" stroke="#c23531" stroke-width="1.15"/>
<circle cx="1177.6" cy="298.9" r="2.35" fill="#fff" stroke="#c23531" stroke-width="1.15"/>
<circle cx="1190.2" cy="296.8" r="2.35" fill="#fff" stroke="#c23531" stroke-width="1.15"/>
<circle cx="1202.8" cy="295.7" r="2.35" fill="#fff" stroke="#c23531" stroke-width="1.15"/>
<circle cx="1215.4" cy="295.2" r="2.35" fill="#fff" stroke="#c23531" stroke-width="1.15"/>
<circle cx="1228.0" cy="296.0" r="2.35" fill="#fff" stroke="#c23531" stroke-width="1.15"/>
<circle cx="1240.6" cy="296.0" r="2.35" fill="#fff" stroke="#c23531" stroke-width="1.15"/>
<circle cx="1253.2" cy="295.5" r="2.35" fill="#fff" stroke="#c23531" stroke-width="1.15"/>
<circle cx="1265.8" cy="293.6" r="2.35" fill="#fff" stroke="#c23531" stroke-width="1.15"/>
<circle cx="1278.4" cy="292.0" r="2.35" fill="#fff" stroke="#c23531" stroke-width="1.15"/>
<circle cx="1291.0" cy="289.9" r="2.35" fill="#fff" stroke="#c23531" stroke-width="1.15"/>
<circle cx="1303.6" cy="288.6" r="2.35" fill="#fff" stroke="#c23531" stroke-width="1.15"/>
<circle cx="1316.2" cy="287.1" r="2.35" fill="#fff" stroke="#c23531" stroke-width="1.15"/>
<circle cx="1328.8" cy="282.9" r="2.35" fill="#fff" stroke="#c23531" stroke-width="1.15"/>
<polyline points="963.4,508.0 976.0,490.2 988.6,469.7 1001.2,446.3 1013.8,425.3 1026.4,403.8 1039.0,385.2 1051.6,368.9 1064.2,355.8 1076.8,344.0 1089.4,335.1 1102.0,326.7 1114.6,321.4 1127.2,317.8 1139.8,315.7 1152.4,312.8 1165.0,309.1 1177.6,309.6 1190.2,307.3 1202.8,304.9 1215.4,303.9 1228.0,301.8 1240.6,299.9 1253.2,298.6 1265.8,296.5 1278.4,294.4 1291.0,292.6 1303.6,291.0 1316.2,290.2 1328.8,288.9" fill="none" stroke="#2f4554" stroke-width="2" stroke-linejoin="bevel"/>
<circle cx="963.4" cy="508.0" r="2.35" fill="#fff" stroke="#2f4554" stroke-width="1.15"/>
<circle cx="976.0" cy="490.2" r="2.35" fill="#fff" stroke="#2f4554" stroke-width="1.15"/>
<circle cx="988.6" cy="469.7" r="2.35" fill="#fff" stroke="#2f4554" stroke-width="1.15"/>
<circle cx="1001.2" cy="446.3" r="2.35" fill="#fff" stroke="#2f4554" stroke-width="1.15"/>
<circle cx="1013.8" cy="425.3" r="2.35" fill="#fff" stroke="#2f4554" stroke-width="1.15"/>
<circle cx="1026.4" cy="403.8" r="2.35" fill="#fff" stroke="#2f4554" stroke-width="1.15"/>
<circle cx="1039.0" cy="385.2" r="2.35" fill="#fff" stroke="#2f4554" stroke-width="1.15"/>
<circle cx="1051.6" cy="368.9" r="2.35" fill="#fff" stroke="#2f4554" stroke-width="1.15"/>
<circle cx="1064.2" cy="355.8" r="2.35" fill="#fff" stroke="#2f4554" stroke-width="1.15"/>
<circle cx="1076.8" cy="344.0" r="2.35" fill="#fff" stroke="#2f4554" stroke-width="1.15"/>
<circle cx="1089.4" cy="335.1" r="2.35" fill="#fff" stroke="#2f4554" stroke-width="1.15"/>
<circle cx="1102.0" cy="326.7" r="2.35" fill="#fff" stroke="#2f4554" stroke-width="1.15"/>
<circle cx="1114.6" cy="321.4" r="2.35" fill="#fff" stroke="#2f4554" stroke-width="1.15"/>
<circle cx="1127.2" cy="317.8" r="2.35" fill="#fff" stroke="#2f4554" stroke-width="1.15"/>
<circle cx="1139.8" cy="315.7" r="2.35" fill="#fff" stroke="#2f4554" stroke-width="1.15"/>
<circle cx="1152.4" cy="312.8" r="2.35" fill="#fff" stroke="#2f4554" stroke-width="1.15"/>
<circle cx="1165.0" cy="309.1" r="2.35" fill="#fff" stroke="#2f4554" stroke-width="1.15"/>
<circle cx="1177.6" cy="309.6" r="2.35" fill="#fff" stroke="#2f4554" stroke-width="1.15"/>
<circle cx="1190.2" cy="307.3" r="2.35" fill="#fff" stroke="#2f4554" stroke-width="1.15"/>
<circle cx="1202.8" cy="304.9" r="2.35" fill="#fff" stroke="#2f4554" stroke-width="1.15"/>
<circle cx="1215.4" cy="303.9" r="2.35" fill="#fff" stroke="#2f4554" stroke-width="1.15"/>
<circle cx="1228.0" cy="301.8" r="2.35" fill="#fff" stroke="#2f4554" stroke-width="1.15"/>
<circle cx="1240.6" cy="299.9" r="2.35" fill="#fff" stroke="#2f4554" stroke-width="1.15"/>
<circle cx="1253.2" cy="298.6" r="2.35" fill="#fff" stroke="#2f4554" stroke-width="1.15"/>
<circle cx="1265.8" cy="296.5" r="2.35" fill="#fff" stroke="#2f4554" stroke-width="1.15"/>
<circle cx="1278.4" cy="294.4" r="2.35" fill="#fff" stroke="#2f4554" stroke-width="1.15"/>
<circle cx="1291.0" cy="292.6" r="2.35" fill="#fff" stroke="#2f4554" stroke-width="1.15"/>
<circle cx="1303.6" cy="291.0" r="2.35" fill="#fff" stroke="#2f4554" stroke-width="1.15"/>
<circle cx="1316.2" cy="290.2" r="2.35" fill="#fff" stroke="#2f4554" stroke-width="1.15"/>
<circle cx="1328.8" cy="288.9" r="2.35" fill="#fff" stroke="#2f4554" stroke-width="1.15"/>
<polyline points="963.4,485.7 976.0,467.3 988.6,444.2 1001.2,418.5 1013.8,396.0 1026.4,377.8 1039.0,364.5 1051.6,352.4 1064.2,341.6 1076.8,333.2 1089.4,326.9 1102.0,322.5 1114.6,319.9 1127.2,317.2 1139.8,315.4 1152.4,311.5 1165.0,307.5 1177.6,306.0 1190.2,307.5 1202.8,307.0 1215.4,306.5 1228.0,304.4 1240.6,302.0 1253.2,301.0 1265.8,299.1 1278.4,297.0 1291.0,295.2 1303.6,294.1 1316.2,292.0 1328.8,289.4" fill="none" stroke="#61a0a8" stroke-width="2" stroke-linejoin="bevel"/>
<circle cx="963.4" cy="485.7" r="2.35" fill="#fff" stroke="#61a0a8" stroke-width="1.15"/>
<circle cx="976.0" cy="467.3" r="2.35" fill="#fff" stroke="#61a0a8" stroke-width="1.15"/>
<circle cx="988.6" cy="444.2" r="2.35" fill="#fff" stroke="#61a0a8" stroke-width="1.15"/>
<circle cx="1001.2" cy="418.5" r="2.35" fill="#fff" stroke="#61a0a8" stroke-width="1.15"/>
<circle cx="1013.8" cy="396.0" r="2.35" fill="#fff" stroke="#61a0a8" stroke-width="1.15"/>
<circle cx="1026.4" cy="377.8" r="2.35" fill="#fff" stroke="#61a0a8" stroke-width="1.15"/>
<circle cx="1039.0" cy="364.5" r="2.35" fill="#fff" stroke="#61a0a8" stroke-width="1.15"/>
<circle cx="1051.6" cy="352.4" r="2.35" fill="#fff" stroke="#61a0a8" stroke-width="1.15"/>
<circle cx="1064.2" cy="341.6" r="2.35" fill="#fff" stroke="#61a0a8" stroke-width="1.15"/>
<circle cx="1076.8" cy="333.2" r="2.35" fill="#fff" stroke="#61a0a8" stroke-width="1.15"/>
<circle cx="1089.4" cy="326.9" r="2.35" fill="#fff" stroke="#61a0a8" stroke-width="1.15"/>
<circle cx="1102.0" cy="322.5" r="2.35" fill="#fff" stroke="#61a0a8" stroke-width="1.15"/>
<circle cx="1114.6" cy="319.9" r="2.35" fill="#fff" stroke="#61a0a8" stroke-width="1.15"/>
<circle cx="1127.2" cy="317.2" r="2.35" fill="#fff" stroke="#61a0a8" stroke-width="1.15"/>
<circle cx="1139.8" cy="315.4" r="2.35" fill="#fff" stroke="#61a0a8" stroke-width="1.15"/>
<circle cx="1152.4" cy="311.5" r="2.35" fill="#fff" stroke="#61a0a8" stroke-width="1.15"/>
<circle cx="1165.0" cy="307.5" r="2.35" fill="#fff" stroke="#61a0a8" stroke-width="1.15"/>
<circle cx="1177.6" cy="306.0" r="2.35" fill="#fff" stroke="#61a0a8" stroke-width="1.15"/>
<circle cx="1190.2" cy="307.5" r="2.35" fill="#fff" stroke="#61a0a8" stroke-width="1.15"/>
<circle cx="1202.8" cy="307.0" r="2.35" fill="#fff" stroke="#61a0a8" stroke-width="1.15"/>
<circle cx="1215.4" cy="306.5" r="2.35" fill="#fff" stroke="#61a0a8" stroke-width="1.15"/>
<circle cx="1228.0" cy="304.4" r="2.35" fill="#fff" stroke="#61a0a8" stroke-width="1.15"/>
<circle cx="1240.6" cy="302.0" r="2.35" fill="#fff" stroke="#61a0a8" stroke-width="1.15"/>
<circle cx="1253.2" cy="301.0" r="2.35" fill="#fff" stroke="#61a0a8" stroke-width="1.15"/>
<circle cx="1265.8" cy="299.1" r="2.35" fill="#fff" stroke="#61a0a8" stroke-width="1.15"/>
<circle cx="1278.4" cy="297.0" r="2.35" fill="#fff" stroke="#61a0a8" stroke-width="1.15"/>
<circle cx="1291.0" cy="295.2" r="2.35" fill="#fff" stroke="#61a0a8" stroke-width="1.15"/>
<circle cx="1303.6" cy="294.1" r="2.35" fill="#fff" stroke="#61a0a8" stroke-width="1.15"/>
<circle cx="1316.2" cy="292.0" r="2.35" fill="#fff" stroke="#61a0a8" stroke-width="1.15"/>
<circle cx="1328.8" cy="289.4" r="2.35" fill="#fff" stroke="#61a0a8" stroke-width="1.15"/>
<polyline points="963.4,517.2 976.0,503.5 988.6,493.0 1001.2,473.6 1013.8,445.3 1026.4,424.0 1039.0,404.4 1051.6,389.9 1064.2,374.2 1076.8,359.7 1089.4,345.6 1102.0,341.1 1114.6,335.6 1127.2,337.4 1139.8,353.4 1152.4,353.2 1165.0,357.1 1177.6,346.9 1190.2,352.9 1202.8,341.9 1215.4,330.9 1228.0,326.4 1240.6,327.5 1253.2,329.3 1265.8,330.1 1278.4,330.1 1291.0,314.6 1303.6,303.3 1316.2,296.5 1328.8,292.8" fill="none" stroke="#d48265" stroke-width="2" stroke-linejoin="bevel"/>
<circle cx="963.4" cy="517.2" r="2.35" fill="#fff" stroke="#d48265" stroke-width="1.15"/>
<circle cx="976.0" cy="503.5" r="2.35" fill="#fff" stroke="#d48265" stroke-width="1.15"/>
<circle cx="988.6" cy="493.0" r="2.35" fill="#fff" stroke="#d48265" stroke-width="1.15"/>
<circle cx="1001.2" cy="473.6" r="2.35" fill="#fff" stroke="#d48265" stroke-width="1.15"/>
<circle cx="1013.8" cy="445.3" r="2.35" fill="#fff" stroke="#d48265" stroke-width="1.15"/>
<circle cx="1026.4" cy="424.0" r="2.35" fill="#fff" stroke="#d48265" stroke-width="1.15"/>
<circle cx="1039.0" cy="404.4" r="2.35" fill="#fff" stroke="#d48265" stroke-width="1.15"/>
<circle cx="1051.6" cy="389.9" r="2.35" fill="#fff" stroke="#d48265" stroke-width="1.15"/>
<circle cx="1064.2" cy="374.2" r="2.35" fill="#fff" stroke="#d48265" stroke-width="1.15"/>
<circle cx="1076.8" cy="359.7" r="2.35" fill="#fff" stroke="#d48265" stroke-width="1.15"/>
<circle cx="1089.4" cy="345.6" r="2.35" fill="#fff" stroke="#d48265" stroke-width="1.15"/>
<circle cx="1102.0" cy="341.1" r="2.35" fill="#fff" stroke="#d48265" stroke-width="1.15"/>
<circle cx="1114.6" cy="335.6" r="2.35" fill="#fff" stroke="#d48265" stroke-width="1.15"/>
<circle cx="1127.2" cy="337.4" r="2.35" fill="#fff" stroke="#d48265" stroke-width="1.15"/>
<circle cx="1139.8" cy="353.4" r="2.35" fill="#fff" stroke="#d48265" stroke-width="1.15"/>
<circle cx="1152.4" cy="353.2" r="2.35" fill="#fff" stroke="#d48265" stroke-width="1.15"/>
<circle cx="1165.0" cy="357.1" r="2.35" fill="#fff" stroke="#d48265" stroke-width="1.15"/>
<circle cx="1177.6" cy="346.9" r="2.35" fill="#fff" stroke="#d48265" stroke-width="1.15"/>
<circle cx="1190.2" cy="352.9" r="2.35" fill="#fff" stroke="#d48265" stroke-width="1.15"/>
<circle cx="1202.8" cy="341.9" r="2.35" fill="#fff" stroke="#d48265" stroke-width="1.15"/>
<circle cx="1215.4" cy="330.9" r="2.35" fill="#fff" stroke="#d48265" stroke-width="1.15"/>
<circle cx="1228.0" cy="326.4" r="2.35" fill="#fff" stroke="#d48265" stroke-width="1.15"/>
<circle cx="1240.6" cy="327.5" r="2.35" fill="#fff" stroke="#d48265" stroke-width="1.15"/>
<circle cx="1253.2" cy="329.3" r="2.35" fill="#fff" stroke="#d48265" stroke-width="1.15"/>
<circle cx="1265.8" cy="330.1" r="2.35" fill="#fff" stroke="#d48265" stroke-width="1.15"/>
<circle cx="1278.4" cy="330.1" r="2.35" fill="#fff" stroke="#d48265" stroke-width="1.15"/>
<circle cx="1291.0" cy="314.6" r="2.35" fill="#fff" stroke="#d48265" stroke-width="1.15"/>
<circle cx="1303.6" cy="303.3" r="2.35" fill="#fff" stroke="#d48265" stroke-width="1.15"/>
<circle cx="1316.2" cy="296.5" r="2.35" fill="#fff" stroke="#d48265" stroke-width="1.15"/>
<circle cx="1328.8" cy="292.8" r="2.35" fill="#fff" stroke="#d48265" stroke-width="1.15"/>
<polyline points="963.4,504.1 976.0,484.1 988.6,463.4 1001.2,451.1 1013.8,436.4 1026.4,417.2 1039.0,400.9 1051.6,385.5 1064.2,376.0 1076.8,365.0 1089.4,354.2 1102.0,344.5 1114.6,336.1 1127.2,328.3 1139.8,323.5 1152.4,316.2 1165.0,311.2 1177.6,306.5 1190.2,308.1 1202.8,311.5 1215.4,312.5 1228.0,319.1 1240.6,319.6 1253.2,322.0 1265.8,320.6 1278.4,313.3 1291.0,307.0 1303.6,298.3 1316.2,292.0 1328.8,289.9" fill="none" stroke="#91c7ae" stroke-width="2" stroke-linejoin="bevel"/>
<circle cx="963.4" cy="504.1" r="2.35" fill="#fff" stroke="#91c7ae" stroke-width="1.15"/>
<circle cx="976.0" cy="484.1" r="2.35" fill="#fff" stroke="#91c7ae" stroke-width="1.15"/>
<circle cx="988.6" cy="463.4" r="2.35" fill="#fff" stroke="#91c7ae" stroke-width="1.15"/>
<circle cx="1001.2" cy="451.1" r="2.35" fill="#fff" stroke="#91c7ae" stroke-width="1.15"/>
<circle cx="1013.8" cy="436.4" r="2.35" fill="#fff" stroke="#91c7ae" stroke-width="1.15"/>
<circle cx="1026.4" cy="417.2" r="2.35" fill="#fff" stroke="#91c7ae" stroke-width="1.15"/>
<circle cx="1039.0" cy="400.9" r="2.35" fill="#fff" stroke="#91c7ae" stroke-width="1.15"/>
<circle cx="1051.6" cy="385.5" r="2.35" fill="#fff" stroke="#91c7ae" stroke-width="1.15"/>
<circle cx="1064.2" cy="376.0" r="2.35" fill="#fff" stroke="#91c7ae" stroke-width="1.15"/>
<circle cx="1076.8" cy="365.0" r="2.35" fill="#fff" stroke="#91c7ae" stroke-width="1.15"/>
<circle cx="1089.4" cy="354.2" r="2.35" fill="#fff" stroke="#91c7ae" stroke-width="1.15"/>
<circle cx="1102.0" cy="344.5" r="2.35" fill="#fff" stroke="#91c7ae" stroke-width="1.15"/>
<circle cx="1114.6" cy="336.1" r="2.35" fill="#fff" stroke="#91c7ae" stroke-width="1.15"/>
<circle cx="1127.2" cy="328.3" r="2.35" fill="#fff" stroke="#91c7ae" stroke-width="1.15"/>
<circle cx="1139.8" cy="323.5" r="2.35" fill="#fff" stroke="#91c7ae" stroke-width="1.15"/>
<circle cx="1152.4" cy="316.2" r="2.35" fill="#fff" stroke="#91c7ae" stroke-width="1.15"/>
<circle cx="1165.0" cy="311.2" r="2.35" fill="#fff" stroke="#91c7ae" stroke-width="1.15"/>
<circle cx="1177.6" cy="306.5" r="2.35" fill="#fff" stroke="#91c7ae" stroke-width="1.15"/>
<circle cx="1190.2" cy="308.1" r="2.35" fill="#fff" stroke="#91c7ae" stroke-width="1.15"/>
<circle cx="1202.8" cy="311.5" r="2.35" fill="#fff" stroke="#91c7ae" stroke-width="1.15"/>
<circle cx="1215.4" cy="312.5" r="2.35" fill="#fff" stroke="#91c7ae" stroke-width="1.15"/>
<circle cx="1228.0" cy="319.1" r="2.35" fill="#fff" stroke="#91c7ae" stroke-width="1.15"/>
<circle cx="1240.6" cy="319.6" r="2.35" fill="#fff" stroke="#91c7ae" stroke-width="1.15"/>
<circle cx="1253.2" cy="322.0" r="2.35" fill="#fff" stroke="#91c7ae" stroke-width="1.15"/>
<circle cx="1265.8" cy="320.6" r="2.35" fill="#fff" stroke="#91c7ae" stroke-width="1.15"/>
<circle cx="1278.4" cy="313.3" r="2.35" fill="#fff" stroke="#91c7ae" stroke-width="1.15"/>
<circle cx="1291.0" cy="307.0" r="2.35" fill="#fff" stroke="#91c7ae" stroke-width="1.15"/>
<circle cx="1303.6" cy="298.3" r="2.35" fill="#fff" stroke="#91c7ae" stroke-width="1.15"/>
<circle cx="1316.2" cy="292.0" r="2.35" fill="#fff" stroke="#91c7ae" stroke-width="1.15"/>
<circle cx="1328.8" cy="289.9" r="2.35" fill="#fff" stroke="#91c7ae" stroke-width="1.15"/>
<polyline points="963.4,525.1 976.0,512.2 988.6,497.5 1001.2,478.1 1013.8,455.3 1026.4,434.8 1039.0,411.2 1051.6,389.4 1064.2,370.8 1076.8,356.1 1089.4,341.9 1102.0,330.9 1114.6,320.6 1127.2,313.0 1139.8,308.1 1152.4,303.1 1165.0,300.4 1177.6,298.9 1190.2,297.6 1202.8,297.0 1215.4,294.1 1228.0,290.5 1240.6,288.9 1253.2,287.6 1265.8,287.1 1278.4,286.0 1291.0,286.3 1303.6,286.8 1316.2,288.9 1328.8,296.0" fill="none" stroke="#749f83" stroke-width="2" stroke-linejoin="bevel"/>
<circle cx="963.4" cy="525.1" r="2.35" fill="#fff" stroke="#749f83" stroke-width="1.15"/>
<circle cx="976.0" cy="512.2" r="2.35" fill="#fff" stroke="#749f83" stroke-width="1.15"/>
<circle cx="988.6" cy="497.5" r="2.35" fill="#fff" stroke="#749f83" stroke-width="1.15"/>
<circle cx="1001.2" cy="478.1" r="2.35" fill="#fff" stroke="#749f83" stroke-width="1.15"/>
<circle cx="1013.8" cy="455.3" r="2.35" fill="#fff" stroke="#749f83" stroke-width="1.15"/>
<circle cx="1026.4" cy="434.8" r="2.35" fill="#fff" stroke="#749f83" stroke-width="1.15"/>
<circle cx="1039.0" cy="411.2" r="2.35" fill="#fff" stroke="#749f83" stroke-width="1.15"/>
<circle cx="1051.6" cy="389.4" r="2.35" fill="#fff" stroke="#749f83" stroke-width="1.15"/>
<circle cx="1064.2" cy="370.8" r="2.35" fill="#fff" stroke="#749f83" stroke-width="1.15"/>
<circle cx="1076.8" cy="356.1" r="2.35" fill="#fff" stroke="#749f83" stroke-width="1.15"/>
<circle cx="1089.4" cy="341.9" r="2.35" fill="#fff" stroke="#749f83" stroke-width="1.15"/>
<circle cx="1102.0" cy="330.9" r="2.35" fill="#fff" stroke="#749f83" stroke-width="1.15"/>
<circle cx="1114.6" cy="320.6" r="2.35" fill="#fff" stroke="#749f83" stroke-width="1.15"/>
<circle cx="1127.2" cy="313.0" r="2.35" fill="#fff" stroke="#749f83" stroke-width="1.15"/>
<circle cx="1139.8" cy="308.1" r="2.35" fill="#fff" stroke="#749f83" stroke-width="1.15"/>
<circle cx="1152.4" cy="303.1" r="2.35" fill="#fff" stroke="#749f83" stroke-width="1.15"/>
<circle cx="1165.0" cy="300.4" r="2.35" fill="#fff" stroke="#749f83" stroke-width="1.15"/>
<circle cx="1177.6" cy="298.9" r="2.35" fill="#fff" stroke="#749f83" stroke-width="1.15"/>
<circle cx="1190.2" cy="297.6" r="2.35" fill="#fff" stroke="#749f83" stroke-width="1.15"/>
<circle cx="1202.8" cy="297.0" r="2.35" fill="#fff" stroke="#749f83" stroke-width="1.15"/>
<circle cx="1215.4" cy="294.1" r="2.35" fill="#fff" stroke="#749f83" stroke-width="1.15"/>
<circle cx="1228.0" cy="290.5" r="2.35" fill="#fff" stroke="#749f83" stroke-width="1.15"/>
<circle cx="1240.6" cy="288.9" r="2.35" fill="#fff" stroke="#749f83" stroke-width="1.15"/>
<circle cx="1253.2" cy="287.6" r="2.35" fill="#fff" stroke="#749f83" stroke-width="1.15"/>
<circle cx="1265.8" cy="287.1" r="2.35" fill="#fff" stroke="#749f83" stroke-width="1.15"/>
<circle cx="1278.4" cy="286.0" r="2.35" fill="#fff" stroke="#749f83" stroke-width="1.15"/>
<circle cx="1291.0" cy="286.3" r="2.35" fill="#fff" stroke="#749f83" stroke-width="1.15"/>
<circle cx="1303.6" cy="286.8" r="2.35" fill="#fff" stroke="#749f83" stroke-width="1.15"/>
<circle cx="1316.2" cy="288.9" r="2.35" fill="#fff" stroke="#749f83" stroke-width="1.15"/>
<circle cx="1328.8" cy="296.0" r="2.35" fill="#fff" stroke="#749f83" stroke-width="1.15"/>
<polyline points="963.4,522.4 976.0,507.7 988.6,488.6 1001.2,466.8 1013.8,441.9 1026.4,414.6 1039.0,391.0 1051.6,369.7 1064.2,351.9 1076.8,336.7 1089.4,325.6 1102.0,315.4 1114.6,308.3 1127.2,304.1 1139.8,300.2 1152.4,297.3 1165.0,296.2 1177.6,294.7 1190.2,293.4 1202.8,293.4 1215.4,293.9 1228.0,294.4 1240.6,293.6 1253.2,293.1 1265.8,292.0 1278.4,289.9 1291.0,288.1 1303.6,286.8 1316.2,287.3 1328.8,286.8" fill="none" stroke="#ca8622" stroke-width="2" stroke-linejoin="bevel"/>
<circle cx="963.4" cy="522.4" r="2.35" fill="#fff" stroke="#ca8622" stroke-width="1.15"/>
<circle cx="976.0" cy="507.7" r="2.35" fill="#fff" stroke="#ca8622" stroke-width="1.15"/>
<circle cx="988.6" cy="488.6" r="2.35" fill="#fff" stroke="#ca8622" stroke-width="1.15"/>
<circle cx="1001.2" cy="466.8" r="2.35" fill="#fff" stroke="#ca8622" stroke-width="1.15"/>
<circle cx="1013.8" cy="441.9" r="2.35" fill="#fff" stroke="#ca8622" stroke-width="1.15"/>
<circle cx="1026.4" cy="414.6" r="2.35" fill="#fff" stroke="#ca8622" stroke-width="1.15"/>
<circle cx="1039.0" cy="391.0" r="2.35" fill="#fff" stroke="#ca8622" stroke-width="1.15"/>
<circle cx="1051.6" cy="369.7" r="2.35" fill="#fff" stroke="#ca8622" stroke-width="1.15"/>
<circle cx="1064.2" cy="351.9" r="2.35" fill="#fff" stroke="#ca8622" stroke-width="1.15"/>
<circle cx="1076.8" cy="336.7" r="2.35" fill="#fff" stroke="#ca8622" stroke-width="1.15"/>
<circle cx="1089.4" cy="325.6" r="2.35" fill="#fff" stroke="#ca8622" stroke-width="1.15"/>
<circle cx="1102.0" cy="315.4" r="2.35" fill="#fff" stroke="#ca8622" stroke-width="1.15"/>
<circle cx="1114.6" cy="308.3" r="2.35" fill="#fff" stroke="#ca8622" stroke-width="1.15"/>
<circle cx="1127.2" cy="304.1" r="2.35" fill="#fff" stroke="#ca8622" stroke-width="1.15"/>
<circle cx="1139.8" cy="300.2" r="2.35" fill="#fff" stroke="#ca8622" stroke-width="1.15"/>
<circle cx="1152.4" cy="297.3" r="2.35" fill="#fff" stroke="#ca8622" stroke-width="1.15"/>
<circle cx="1165.0" cy="296.2" r="2.35" fill="#fff" stroke="#ca8622" stroke-width="1.15"/>
<circle cx="1177.6" cy="294.7" r="2.35" fill="#fff" stroke="#ca8622" stroke-width="1.15"/>
<circle cx="1190.2" cy="293.4" r="2.35" fill="#fff" stroke="#ca8622" stroke-width="1.15"/>
<circle cx="1202.8" cy="293.4" r="2.35" fill="#fff" stroke="#ca8622" stroke-width="1.15"/>
<circle cx="1215.4" cy="293.9" r="2.35" fill="#fff" stroke="#ca8622" stroke-width="1.15"/>
<circle cx="1228.0" cy="294.4" r="2.35" fill="#fff" stroke="#ca8622" stroke-width="1.15"/>
<circle cx="1240.6" cy="293.6" r="2.35" fill="#fff" stroke="#ca8622" stroke-width="1.15"/>
<circle cx="1253.2" cy="293.1" r="2.35" fill="#fff" stroke="#ca8622" stroke-width="1.15"/>
<circle cx="1265.8" cy="292.0" r="2.35" fill="#fff" stroke="#ca8622" stroke-width="1.15"/>
<circle cx="1278.4" cy="289.9" r="2.35" fill="#fff" stroke="#ca8622" stroke-width="1.15"/>
<circle cx="1291.0" cy="288.1" r="2.35" fill="#fff" stroke="#ca8622" stroke-width="1.15"/>
<circle cx="1303.6" cy="286.8" r="2.35" fill="#fff" stroke="#ca8622" stroke-width="1.15"/>
<circle cx="1316.2" cy="287.3" r="2.35" fill="#fff" stroke="#ca8622" stroke-width="1.15"/>
<circle cx="1328.8" cy="286.8" r="2.35" fill="#fff" stroke="#ca8622" stroke-width="1.15"/>
<polyline points="963.4,511.9 976.0,496.5 988.6,477.6 1001.2,456.3 1013.8,437.2 1026.4,420.6 1039.0,404.6 1051.6,394.9 1064.2,386.8 1076.8,379.2 1089.4,370.8 1102.0,361.6 1114.6,351.6 1127.2,346.6 1139.8,341.1 1152.4,335.6 1165.0,333.0 1177.6,332.7 1190.2,330.9 1202.8,328.3 1215.4,323.8 1228.0,319.6 1240.6,316.4 1253.2,315.4 1265.8,311.2 1278.4,306.5 1291.0,303.9 1303.6,303.3 1316.2,308.1 1328.8,311.5" fill="none" stroke="#bda29a" stroke-width="2" stroke-linejoin="bevel"/>
<circle cx="963.4" cy="511.9" r="2.35" fill="#fff" stroke="#bda29a" stroke-width="1.15"/>
<circle cx="976.0" cy="496.5" r="2.35" fill="#fff" stroke="#bda29a" stroke-width="1.15"/>
<circle cx="988.6" cy="477.6" r="2.35" fill="#fff" stroke="#bda29a" stroke-width="1.15"/>
<circle cx="1001.2" cy="456.3" r="2.35" fill="#fff" stroke="#bda29a" stroke-width="1.15"/>
<circle cx="1013.8" cy="437.2" r="2.35" fill="#fff" stroke="#bda29a" stroke-width="1.15"/>
<circle cx="1026.4" cy="420.6" r="2.35" fill="#fff" stroke="#bda29a" stroke-width="1.15"/>
<circle cx="1039.0" cy="404.6" r="2.35" fill="#fff" stroke="#bda29a" stroke-width="1.15"/>
<circle cx="1051.6" cy="394.9" r="2.35" fill="#fff" stroke="#bda29a" stroke-width="1.15"/>
<circle cx="1064.2" cy="386.8" r="2.35" fill="#fff" stroke="#bda29a" stroke-width="1.15"/>
<circle cx="1076.8" cy="379.2" r="2.35" fill="#fff" stroke="#bda29a" stroke-width="1.15"/>
<circle cx="1089.4" cy="370.8" r="2.35" fill="#fff" stroke="#bda29a" stroke-width="1.15"/>
<circle cx="1102.0" cy="361.6" r="2.35" fill="#fff" stroke="#bda29a" stroke-width="1.15"/>
<circle cx="1114.6" cy="351.6" r="2.35" fill="#fff" stroke="#bda29a" stroke-width="1.15"/>
<circle cx="1127.2" cy="346.6" r="2.35" fill="#fff" stroke="#bda29a" stroke-width="1.15"/>
<circle cx="1139.8" cy="341.1" r="2.35" fill="#fff" stroke="#bda29a" stroke-width="1.15"/>
<circle cx="1152.4" cy="335.6" r="2.35" fill="#fff" stroke="#bda29a" stroke-width="1.15"/>
<circle cx="1165.0" cy="333.0" r="2.35" fill="#fff" stroke="#bda29a" stroke-width="1.15"/>
<circle cx="1177.6" cy="332.7" r="2.35" fill="#fff" stroke="#bda29a" stroke-width="1.15"/>
<circle cx="1190.2" cy="330.9" r="2.35" fill="#fff" stroke="#bda29a" stroke-width="1.15"/>
<circle cx="1202.8" cy="328.3" r="2.35" fill="#fff" stroke="#bda29a" stroke-width="1.15"/>
<circle cx="1215.4" cy="323.8" r="2.35" fill="#fff" stroke="#bda29a" stroke-width="1.15"/>
<circle cx="1228.0" cy="319.6" r="2.35" fill="#fff" stroke="#bda29a" stroke-width="1.15"/>
<circle cx="1240.6" cy="316.4" r="2.35" fill="#fff" stroke="#bda29a" stroke-width="1.15"/>
<circle cx="1253.2" cy="315.4" r="2.35" fill="#fff" stroke="#bda29a" stroke-width="1.15"/>
<circle cx="1265.8" cy="311.2" r="2.35" fill="#fff" stroke="#bda29a" stroke-width="1.15"/>
<circle cx="1278.4" cy="306.5" r="2.35" fill="#fff" stroke="#bda29a" stroke-width="1.15"/>
<circle cx="1291.0" cy="303.9" r="2.35" fill="#fff" stroke="#bda29a" stroke-width="1.15"/>
<circle cx="1303.6" cy="303.3" r="2.35" fill="#fff" stroke="#bda29a" stroke-width="1.15"/>
<circle cx="1316.2" cy="308.1" r="2.35" fill="#fff" stroke="#bda29a" stroke-width="1.15"/>
<circle cx="1328.8" cy="311.5" r="2.35" fill="#fff" stroke="#bda29a" stroke-width="1.15"/>
</g>
<line x1="1354" x2="1385" y1="276.1" y2="276.1" stroke="#c23531" stroke-width="1.2"/>
<circle cx="1369.5" cy="276.1" r="7" fill="#fff" stroke="#c23531" stroke-width="1.2"/>
<text class="lg" x="1391.5" y="281.3">Europe-UK</text>
<line x1="1354" x2="1385" y1="303.9" y2="303.9" stroke="#2f4554" stroke-width="1.2"/>
<circle cx="1369.5" cy="303.9" r="7" fill="#fff" stroke="#2f4554" stroke-width="1.2"/>
<text class="lg" x="1391.5" y="309.1">Global</text>
<line x1="1354" x2="1385" y1="331.7" y2="331.7" stroke="#61a0a8" stroke-width="1.2"/>
<circle cx="1369.5" cy="331.7" r="7" fill="#fff" stroke="#61a0a8" stroke-width="1.2"/>
<text class="lg" x="1391.5" y="336.9">Europe-noUK</text>
<line x1="1354" x2="1385" y1="359.5" y2="359.5" stroke="#d48265" stroke-width="1.2"/>
<circle cx="1369.5" cy="359.5" r="7" fill="#fff" stroke="#d48265" stroke-width="1.2"/>
<text class="lg" x="1391.5" y="364.7">Africa</text>
<line x1="1354" x2="1385" y1="387.3" y2="387.3" stroke="#91c7ae" stroke-width="1.2"/>
<circle cx="1369.5" cy="387.3" r="7" fill="#fff" stroke="#91c7ae" stroke-width="1.2"/>
<text class="lg" x="1391.5" y="392.5">SouthAmerica</text>
<line x1="1354" x2="1385" y1="415.1" y2="415.1" stroke="#749f83" stroke-width="1.2"/>
<circle cx="1369.5" cy="415.1" r="7" fill="#fff" stroke="#749f83" stroke-width="1.2"/>
<text class="lg" x="1391.5" y="420.3">Oceania</text>
<line x1="1354" x2="1385" y1="442.9" y2="442.9" stroke="#ca8622" stroke-width="1.2"/>
<circle cx="1369.5" cy="442.9" r="7" fill="#fff" stroke="#ca8622" stroke-width="1.2"/>
<text class="lg" x="1391.5" y="448.1">NorthAmerica</text>
<line x1="1354" x2="1385" y1="470.7" y2="470.7" stroke="#bda29a" stroke-width="1.2"/>
<circle cx="1369.5" cy="470.7" r="7" fill="#fff" stroke="#bda29a" stroke-width="1.2"/>
<text class="lg" x="1391.5" y="475.9">Asia</text>
<rect x="973.5" y="593.5" width="362" height="40" fill="#fff" stroke="#ddd" stroke-width="1"/>
<rect x="1285" y="593" width="53" height="40" fill="#b5c0d8" fill-opacity="0.42"/>
<path d="M1285 612 Q1300 603 1338 600.5 L1338 634 L1285 634 Z" fill="#aab4cf" fill-opacity="0.4"/>
<circle cx="1285" cy="611" r="13" fill="#fff" filter="url(#hsh)"/>
<line x1="1280" x2="1290" y1="608.1" y2="608.1" stroke="#444" stroke-width="1.8"/>
<line x1="1280" x2="1290" y1="614.8" y2="614.8" stroke="#444" stroke-width="1.8"/>
<circle cx="1338" cy="611" r="13" fill="#fff" filter="url(#hsh)"/>
<line x1="1333" x2="1343" y1="608.1" y2="608.1" stroke="#444" stroke-width="1.8"/>
<line x1="1333" x2="1343" y1="614.8" y2="614.8" stroke="#444" stroke-width="1.8"/>
</svg>
</div>
<div id="foot" class="abs"></div>
</body>
</html>
